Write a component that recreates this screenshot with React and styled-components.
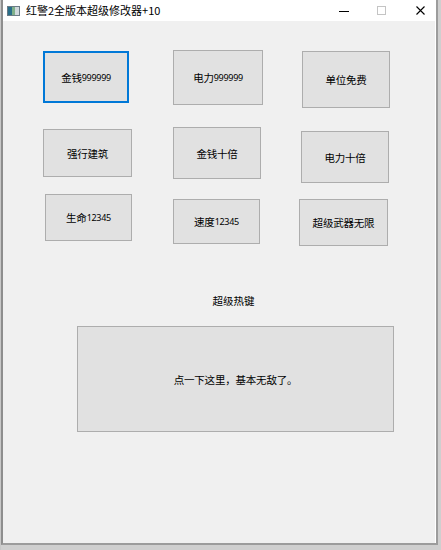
import React from "react";
import styled, { createGlobalStyle } from "styled-components";

const Global = createGlobalStyle`
  html, body { margin: 0; padding: 0; background: #9a9a9a; }
  body { font-family: "Noto Sans CJK SC", "Noto Sans", sans-serif; }
  #root { width: 441px; height: 550px; overflow: hidden; }
`;

const Desktop = styled.div`
  width: 441px;
  height: 550px;
  background: linear-gradient(#c8c8c8, #c8c8c8) 0 0 / 1px 100% no-repeat, #cfcfcf;
  display: flex;
  flex-direction: column;
`;

const Window = styled.div`
  margin-left: 1px;
  width: 437px;
  height: 545px;
  border-left: 2px solid #8e8e8e;
  border-right: 2px solid #9c9c9c;
  border-bottom: 2px solid #9c9c9c;
  background: #ffffff;
  display: flex;
  flex-direction: column;
  box-sizing: border-box;
`;

const TitleBar = styled.div`
  height: 21px;
  flex: none;
  display: flex;
  align-items: center;
  background: #ffffff;
  padding-left: 4px;
`;

const TitleText = styled.span`
  font-size: 11px;
  color: #000;
  margin-left: 6px;
  white-space: nowrap;
  line-height: 21px;
`;

const Controls = styled.div`
  margin-left: auto;
  display: flex;
  align-items: center;
  height: 21px;
`;

const Ctl = styled.div`
  width: ${(p) => p.$w}px;
  height: 21px;
  display: flex;
  align-items: center;
  justify-content: center;
`;

const Client = styled.div`
  flex: 1;
  background: #f0f0f0;
  margin-right: 1px;
  display: flex;
  flex-direction: column;
`;

const Grid = styled.div`
  display: grid;
  grid-template-columns: 130px 126px 100px;
  grid-template-rows: 77px 67px 60px;
  padding: 29px 0 0 40px;
  align-items: start;
`;

const Btn = styled.button`
  box-sizing: border-box;
  width: ${(p) => p.$w}px;
  height: ${(p) => p.$h}px;
  margin-left: ${(p) => p.$dx || 0}px;
  margin-top: ${(p) => p.$dy || 0}px;
  background: #e1e1e1;
  border: ${(p) => (p.$focus ? "2px solid #0078d7" : "1px solid #adadad")};
  padding: 0;
  font-family: "Noto Sans CJK SC", "Noto Sans", sans-serif;
  font-size: 10.5px;
  color: #000;
  display: flex;
  align-items: center;
  justify-content: center;
  white-space: nowrap;
  letter-spacing: -0.2px;
`;

const Num = styled.span`
  font-size: 9px;
  font-family: "Noto Sans", sans-serif;
  letter-spacing: -0.3px;
`;

const HotSection = styled.div`
  display: flex;
  flex-direction: column;
  padding-left: 74px;
  padding-top: 40px;
`;

const HotLabel = styled.div`
  width: 317px;
  text-align: center;
  font-size: 10.5px;
  line-height: 14px;
  height: 14px;
  color: #000;
  padding-right: 4px;
  box-sizing: border-box;
`;

const BigBtn = styled(Btn)`
  margin-top: 18px;
  font-size: 10.5px;
`;

const AppIcon = () => (
  <svg width="13" height="10" viewBox="0 0 13 10">
    <rect x="0.5" y="0.5" width="12" height="9" fill="#e8eef0" stroke="#6b7b86" />
    <rect x="1" y="1" width="4" height="8" fill="#2a6f8a" />
    <rect x="5" y="1" width="3" height="8" fill="#7fb08a" />
    <rect x="8" y="1" width="4" height="8" fill="#cfd8dc" />
  </svg>
);

export default function App() {
  return (
    <>
      <Global />
      <Desktop>
        <Window>
          <TitleBar>
            <AppIcon />
            <TitleText>红警2全版本超级修改器+10</TitleText>
            <Controls>
              <Ctl $w={28}>
                <svg width="10" height="10" viewBox="0 0 10 10">
                  <line x1="0" y1="5.5" x2="10" y2="5.5" stroke="#000" strokeWidth="1" />
                </svg>
              </Ctl>
              <Ctl $w={46}>
                <svg width="9" height="9" viewBox="0 0 9 9">
                  <rect x="0.5" y="0.5" width="8" height="8" fill="none" stroke="#c4c4c4" />
                </svg>
              </Ctl>
              <Ctl $w={32}>
                <svg width="9" height="9" viewBox="0 0 9 9">
                  <path d="M0.5 0.5 L8.5 8.5 M8.5 0.5 L0.5 8.5" stroke="#000" strokeWidth="1.1" />
                </svg>
              </Ctl>
            </Controls>
          </TitleBar>
          <Client>
            <Grid>
              <Btn $w={86} $h={52} $dy={1} $focus>
                金钱<Num>999999</Num>
              </Btn>
              <Btn $w={90} $h={55}>
                电力<Num>999999</Num>
              </Btn>
              <Btn $w={88} $h={57} $dy={1} $dx={3}>
                单位免费
              </Btn>
              <Btn $w={89} $h={48} $dy={2}>
                强行建筑
              </Btn>
              <Btn $w={88} $h={52}>
                金钱十倍
              </Btn>
              <Btn $w={88} $h={52} $dy={4} $dx={2}>
                电力十倍
              </Btn>
              <Btn $w={87} $h={47} $dx={2}>
                生命<Num>12345</Num>
              </Btn>
              <Btn $w={87} $h={45} $dy={5}>
                速度<Num>12345</Num>
              </Btn>
              <Btn $w={89} $h={47} $dy={5}>
                超级武器无限
              </Btn>
            </Grid>
            <HotSection>
              <HotLabel>超级热键</HotLabel>
              <BigBtn $w={317} $h={106}>
                点一下这里，基本无敌了。
              </BigBtn>
            </HotSection>
          </Client>
        </Window>
      </Desktop>
    </>
  );
}
